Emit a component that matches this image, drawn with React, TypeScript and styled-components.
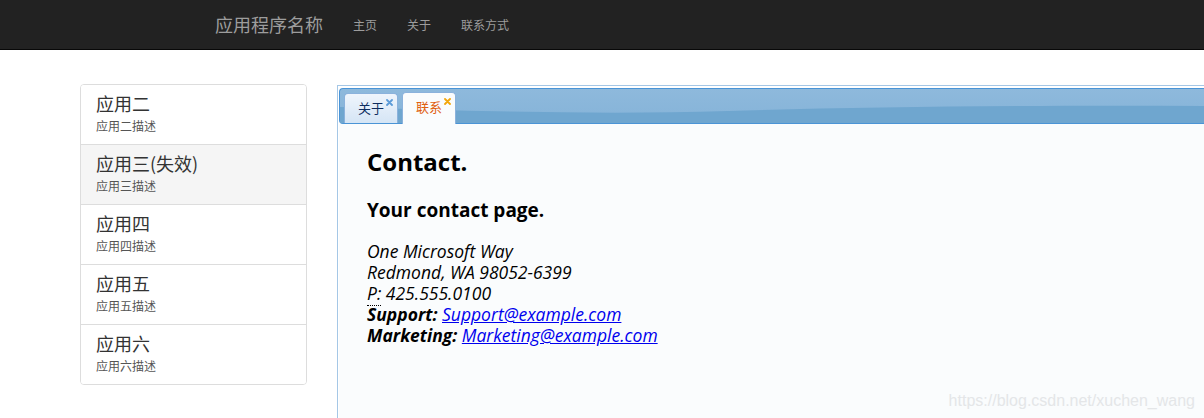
import React from 'react';
import styled, { createGlobalStyle } from 'styled-components';

const GlobalStyle = createGlobalStyle`
  html, body {
    margin: 0;
    padding: 0;
    background: #fff;
    overflow: hidden;
  }
  body {
    font-family: "Noto Sans", "Noto Sans CJK SC", sans-serif;
    color: #333;
  }
`;

const Navbar = styled.nav`
  height: 49px;
  background: #222;
  border-bottom: 1px solid #080808;
`;

const NavInner = styled.div`
  display: flex;
  align-items: center;
  height: 100%;
  margin-left: 200px;
`;

const Brand = styled.a`
  padding: 0 15px;
  font-size: 18px;
  color: #9d9d9d;
  font-family: "Noto Sans CJK SC", sans-serif;
  text-decoration: none;
  margin-top: -2px;
`;

const NavLink = styled.a`
  padding: 0 15px;
  font-size: 12px;
  color: #9d9d9d;
  font-family: "Noto Sans CJK SC", sans-serif;
  text-decoration: none;
`;

const Main = styled.div`
  display: flex;
  align-items: flex-start;
  gap: 30px;
  padding: 34px 0 0 80px;
`;

const AppList = styled.ul`
  list-style: none;
  margin: 0;
  padding: 0;
  width: 225px;
  flex: none;
  border: 1px solid #ddd;
  border-radius: 4px;
  overflow: hidden;
`;

const AppItem = styled.li<{ $disabled?: boolean }>`
  height: 60px;
  box-sizing: border-box;
  padding: 7px 15px 0;
  background: ${(p) => (p.$disabled ? '#f5f5f5' : '#fff')};
  border-bottom: 1px solid #ddd;
  font-family: "Noto Sans CJK SC", sans-serif;

  &:last-child {
    height: 59px;
    border-bottom: none;
  }
`;

const AppTitle = styled.div`
  font-size: 18px;
  line-height: 22px;
  color: #333;
`;

const AppDesc = styled.div`
  margin-top: 4px;
  font-size: 12px;
  line-height: 16px;
  color: #555;
`;

const TabsPanel = styled.section`
  flex: 1;
  margin-top: 1px;
  height: 340px;
  border-left: 1px solid #a5c7e6;
  border-top: 1px solid #a5c7e6;
  padding: 2px 0 0 1px;
  background: #fff;
  display: flex;
  flex-direction: column;
`;

const TabHeader = styled.div`
  position: relative;
  height: 34px;
  display: flex;
  align-items: flex-end;
  gap: 4px;
  padding-left: 4px;
  border: 1px solid #4a94d6;
  border-right: none;
  border-radius: 4px 0 0 4px;
  background: linear-gradient(#8eb9dc, #85b3d8);
`;

const Wave = styled.svg`
  position: absolute;
  left: 0;
  top: 0;
  width: 100%;
  height: 100%;
`;

const Tab = styled.div<{ $active?: boolean }>`
  position: relative;
  display: flex;
  align-items: flex-start;
  box-sizing: border-box;
  height: ${(p) => (p.$active ? 32 : 30)}px;
  margin-bottom: ${(p) => (p.$active ? -1 : 0)}px;
  padding: 0 4px 0 13px;
  border: 1px solid #8bb2dc;
  border-bottom: none;
  border-radius: 4px 4px 0 0;
  background: ${(p) =>
    p.$active ? '#fafcfd' : 'linear-gradient(#eff5fc, #d5e5f5)'};
`;

const TabLabel = styled.span<{ $active?: boolean }>`
  font-family: "Noto Sans CJK SC", sans-serif;
  font-size: 13px;
  line-height: 28px;
  color: ${(p) => (p.$active ? '#e0600f' : '#0e2d5f')};
`;

const CloseIcon = styled.svg`
  width: 7px;
  height: 7px;
  margin: 5px 0 0 2px;
`;

const TabBody = styled.div`
  flex: 1;
  background: #fafcfd;
  padding: 20px 28px;
  font-family: "Open Sans", "Noto Sans", sans-serif;
  color: #000;
`;

const Heading = styled.h2`
  margin: 0 0 16px;
  font-size: 24px;
  font-weight: 700;
  line-height: 36px;
`;

const SubHeading = styled.h3`
  margin: 0 0 17px;
  font-size: 19px;
  font-weight: 700;
  line-height: 28px;
`;

const Address = styled.address`
  font-style: italic;
  font-size: 17.5px;
  line-height: 21px;
`;

const Abbr = styled.abbr`
  text-decoration: none;
  border-bottom: 1px dotted #000;
`;

const MailLink = styled.a`
  color: #0000ee;
  text-decoration: underline;
`;

const Watermark = styled.div`
  position: absolute;
  right: 9px;
  bottom: 8px;
  font-family: "Liberation Sans", Arial, sans-serif;
  font-size: 16px;
  color: #e4e6e8;
`;

const apps = [
  { title: '应用二', desc: '应用二描述' },
  { title: '应用三(失效)', desc: '应用三描述', disabled: true },
  { title: '应用四', desc: '应用四描述' },
  { title: '应用五', desc: '应用五描述' },
  { title: '应用六', desc: '应用六描述' },
];

const Close = ({ color }: { color: string }) => (
  <CloseIcon viewBox="0 0 7 7">
    <path d="M1 1 L6 6 M6 1 L1 6" stroke={color} strokeWidth="1.8" strokeLinecap="round" />
  </CloseIcon>
);

const App = () => {
  return (
    <>
      <GlobalStyle />
      <Navbar>
        <NavInner>
          <Brand href="#">应用程序名称</Brand>
          <NavLink href="#">主页</NavLink>
          <NavLink href="#">关于</NavLink>
          <NavLink href="#">联系方式</NavLink>
        </NavInner>
      </Navbar>
      <Main>
        <AppList>
          {apps.map((a) => (
            <AppItem key={a.title} $disabled={a.disabled}>
              <AppTitle>{a.title}</AppTitle>
              <AppDesc>{a.desc}</AppDesc>
            </AppItem>
          ))}
        </AppList>
        <TabsPanel>
          <TabHeader>
            <Wave viewBox="0 0 1000 34" preserveAspectRatio="none">
              <path
                d="M0 18 C 150 22, 300 26, 450 22 C 600 18, 800 16, 1000 17 L1000 34 L0 34 Z"
                fill="#6fa6cf"
              />
            </Wave>
            <Tab>
              <TabLabel>关于</TabLabel>
              <Close color="#5b9bd8" />
            </Tab>
            <Tab $active>
              <TabLabel $active>联系</TabLabel>
              <Close color="#f2a60c" />
            </Tab>
          </TabHeader>
          <TabBody>
            <Heading>Contact.</Heading>
            <SubHeading>Your contact page.</SubHeading>
            <Address>
              One Microsoft Way
              <br />
              Redmond, WA 98052-6399
              <br />
              <Abbr title="Phone">P:</Abbr> 425.555.0100
              <br />
              <strong>Support:</strong> <MailLink href="#">Support@example.com</MailLink>
              <br />
              <strong>Marketing:</strong> <MailLink href="#">Marketing@example.com</MailLink>
            </Address>
          </TabBody>
        </TabsPanel>
      </Main>
      <Watermark>https://blog.csdn.net/xuchen_wang</Watermark>
    </>
  );
};

export default App;
